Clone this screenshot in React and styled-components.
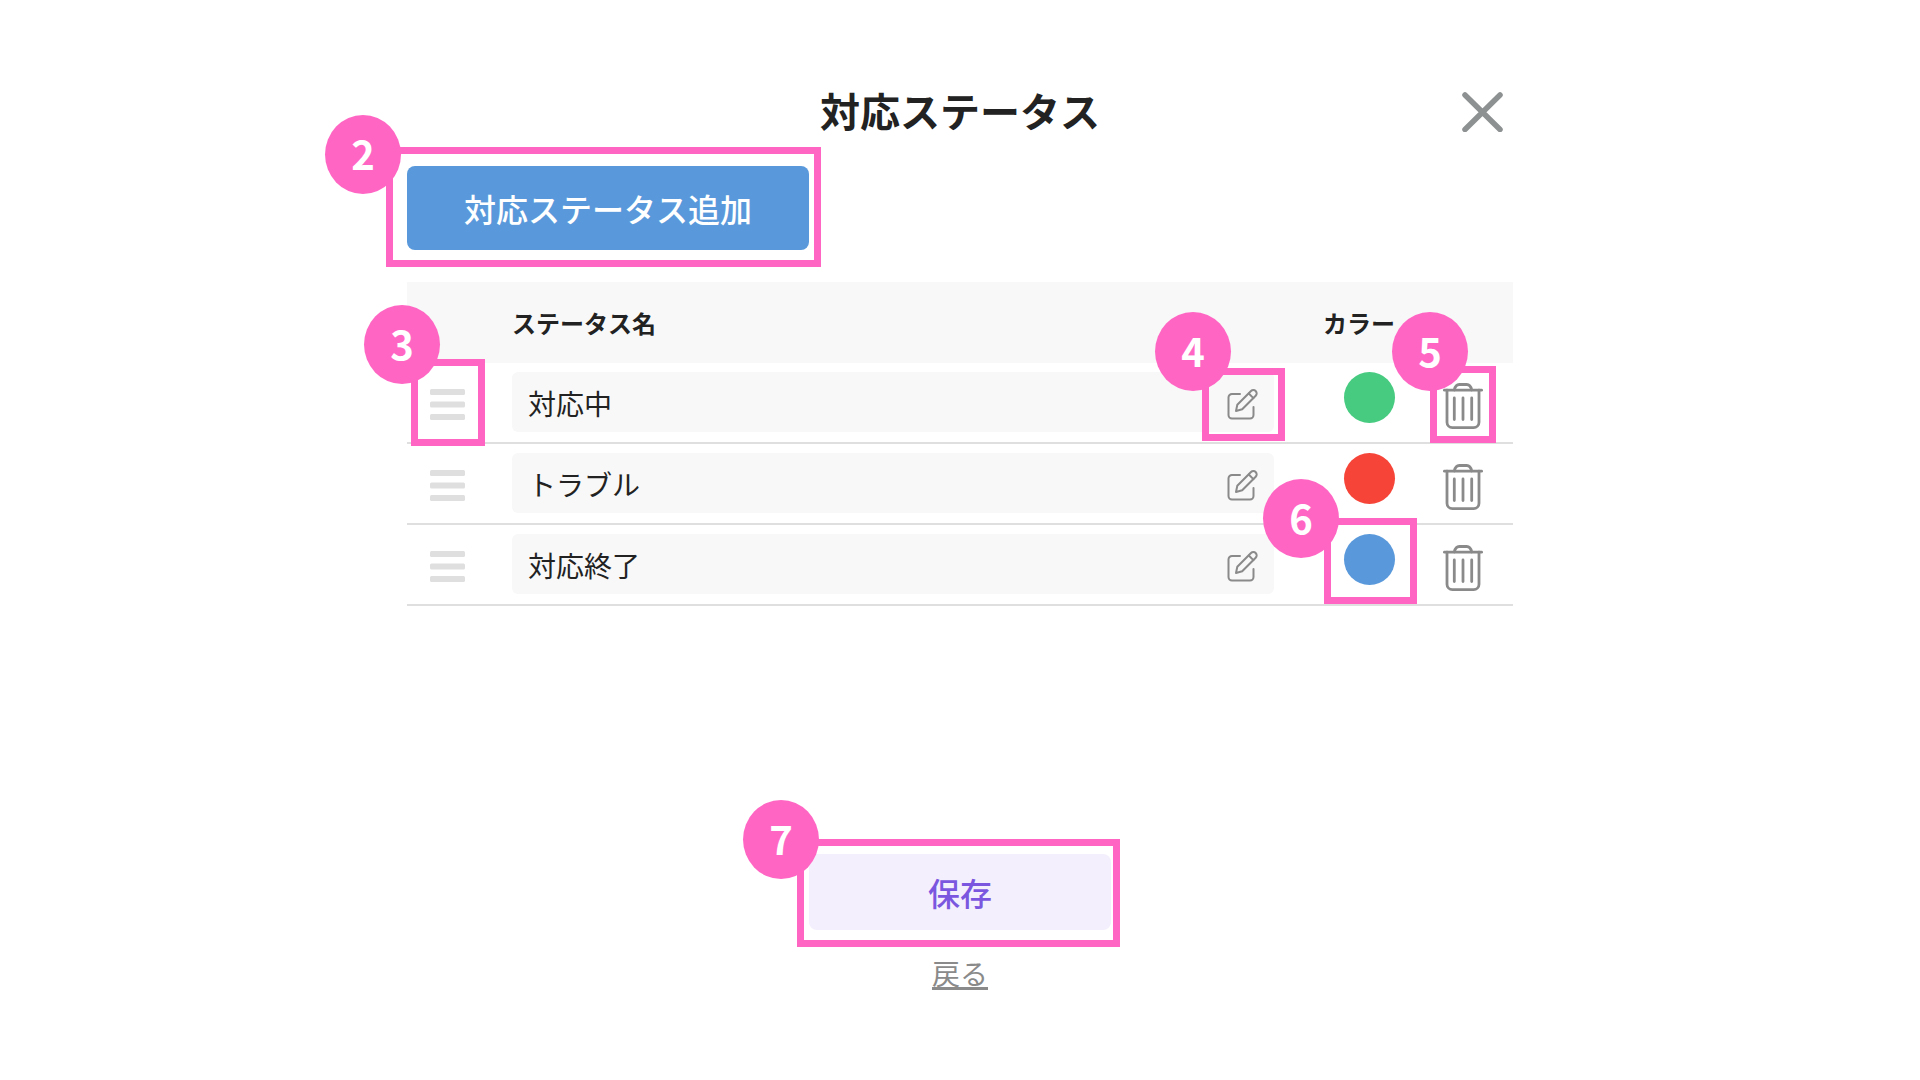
import { useState } from "react";
import styled, { createGlobalStyle } from "styled-components";

const GlobalStyle = createGlobalStyle`
  * {
    box-sizing: border-box;
  }

  body {
    margin: 0;
    background: #fff;
    color: #222;
    font-family: "Noto Sans CJK JP", sans-serif;
  }

  button, input {
    font-family: inherit;
    color: inherit;
  }
`;

const Dialog = styled.main`
  max-width: 1106px;
  margin: 0 auto;
  padding: 92px 0 60px;
`;

const Header = styled.header`
  display: grid;
  grid-template-columns: 1fr auto 1fr;
  align-items: start;
  height: 40px;
  margin-bottom: 34px;
`;

const Title = styled.h1`
  grid-column: 2;
  margin: 0;
  font-size: 40px;
  line-height: 36px;
  font-weight: 700;
`;

const IconButton = styled.button`
  display: block;
  padding: 0;
  border: none;
  background: none;
  cursor: pointer;

  svg {
    display: block;
  }
`;

const CloseButton = styled(IconButton)`
  justify-self: end;
  margin-right: 10px;
`;

const Target = styled.div`
  position: relative;
  width: ${({ $width }) => $width};
`;

const Frame = styled.div`
  position: absolute;
  z-index: 1;
  inset: ${({ $inset }) => $inset};
  border: 7px solid #ff66c4;
  pointer-events: none;
`;

const Badge = styled.span`
  position: absolute;
  left: ${({ $x }) => $x}px;
  top: ${({ $y }) => $y}px;
  display: flex;
  align-items: center;
  justify-content: center;
  width: 76px;
  height: 79px;
  padding-bottom: 4px;
  border-radius: 50%;
  background: #ff66c4;
  color: #fff;
  font-size: 40px;
  line-height: 40px;
  font-weight: 700;
`;

const PrimaryButton = styled.button`
  display: block;
  width: 100%;
  height: ${({ $height }) => $height}px;
  padding: 0;
  border: none;
  border-radius: 8px;
  background: ${({ $background }) => $background};
  color: ${({ $color }) => $color};
  font-size: 32px;
  line-height: 40px;
  font-weight: 500;
  cursor: pointer;
`;

const ListArea = styled.section`
  min-height: 604px;
  padding-top: 32px;
`;

const Table = styled.table`
  width: 100%;
  table-layout: fixed;
  border-collapse: separate;
  border-spacing: 0;
`;

const HeadCell = styled.th`
  width: ${({ $width }) => $width};
  height: 81px;
  padding: 0;
  background: #f8f8f8;
  font-size: 24px;
  line-height: 32px;
  font-weight: 700;
  text-align: left;
`;

const Cell = styled.td`
  height: 81px;
  padding: ${({ $top }) => $top || 9}px 0 9px ${({ $indent }) => $indent || 0}px;
  border-bottom: 2px solid #dfdfdf;
  vertical-align: ${({ $align }) => $align || "middle"};
`;

const NameBox = styled.div`
  display: flex;
  align-items: center;
  height: 60px;
  margin-right: 49px;
  padding: 5px 16px 0;
  border-radius: 6px;
  background: #f8f8f8;
`;

const NameInput = styled.input`
  flex: 1;
  min-width: 0;
  padding: 0 0 4px;
  border: none;
  outline: none;
  background: none;
  font-size: 28px;
  line-height: 40px;
`;

const Swatch = styled.button`
  display: block;
  width: 51px;
  height: 51px;
  padding: 0;
  border: none;
  border-radius: 50%;
  background: ${({ $color }) => $color};
  cursor: pointer;
`;

const Footer = styled.footer`
  display: flex;
  flex-direction: column;
  align-items: center;
  gap: 23px;
`;

const BackLink = styled.a`
  color: #8a8a8a;
  font-size: 28px;
  line-height: 40px;
  text-decoration: underline;
  text-decoration-thickness: 3px;
  text-underline-offset: 2px;
`;

function CloseIcon() {
  return (
    <svg width="41" height="40" viewBox="0 0 41 40" fill="none" stroke="#8d9191" strokeWidth="5.5" strokeLinecap="round">
      <path d="M3 3 38 37.5M38 3 3 37.5" />
    </svg>
  );
}

function HandleIcon() {
  return (
    <svg width="35" height="31" viewBox="0 0 35 31" fill="#dfdfdf">
      <rect width="35" height="6" rx="1.5" />
      <rect y="12.5" width="35" height="6" rx="1.5" />
      <rect y="25" width="35" height="6" rx="1.5" />
    </svg>
  );
}

function EditIcon() {
  return (
    <svg width="31" height="31" viewBox="0 0 31 31" fill="none" stroke="#8a8a8a" strokeWidth="2" strokeLinecap="round" strokeLinejoin="round">
      <path d="M13 5H5a3.5 3.5 0 0 0-3.5 3.5V26A3.5 3.5 0 0 0 5 29.5h18a3.5 3.5 0 0 0 3.5-3.5v-8" />
      <path d="M9 22l1.3-6.3L24 2a3.2 3.2 0 0 1 4.7 4.700L15.2 20.3z" />
      <path d="M21.8 4.5l4.6 4.6" />
    </svg>
  );
}

function TrashIcon() {
  return (
    <svg width="40" height="46" viewBox="0 0 40 46" fill="none" stroke="#8a8a8a" strokeWidth="2.8" strokeLinecap="round">
      <path d="M1.4 7.2h37.2" />
      <path d="M11.3 7c.8-3.7 2.4-5.5 5-5.5h7.4c2.6 0 4.2 1.8 5 5.5" />
      <path d="M4 7.2v32a5.4 5.4 0 0 0 5.4 5.4h21.2a5.4 5.4 0 0 0 5.4-5.4v-32" />
      <path d="M11.3 15v21.5M20 15v21.5M28.7 15v21.5" />
    </svg>
  );
}

function Callout({ number, inset, x, y }) {
  return (
    <Frame $inset={inset}>
      <Badge $x={x - 7} $y={y - 7}>{number}</Badge>
    </Frame>
  );
}

const initialStatuses = [
  { id: 1, name: "対応中", color: "#46cb80" },
  { id: 2, name: "トラブル", color: "#f64438" },
  { id: 3, name: "対応終了", color: "#5999db" },
];

function StatusRow({ status, onRename, onDelete }) {
  const { id, name, color } = status;
  return (
    <tr>
      <Cell $indent={23} $top={13}>
        <Target $width="35px">
          <IconButton type="button" aria-label="並び替え"><HandleIcon /></IconButton>
          {id === 1 && <Callout number={3} inset="-30px -20px -26px -19px" x={-47} y={-54} />}
        </Target>
      </Cell>
      <Cell $align="top">
        <NameBox>
          <NameInput aria-label="ステータス名" value={name} onChange={(e) => onRename(id, e.target.value)} />
          <Target $width="31px">
            <IconButton type="button" aria-label="編集"><EditIcon /></IconButton>
            {id === 1 && <Callout number={4} inset="-21px -27px -21px -25px" x={-47} y={-56} />}
          </Target>
        </NameBox>
      </Cell>
      <Cell $indent={21} $align="top">
        <Target $width="51px">
          <Swatch type="button" aria-label="カラー" $color={color} />
          {id === 3 && <Callout number={6} inset="-16px -22px -19px -20px" x={-61} y={-39} />}
        </Target>
      </Cell>
      <Cell $top={16}>
        <Target $width="40px">
          <IconButton type="button" aria-label="削除" onClick={() => onDelete(id)}><TrashIcon /></IconButton>
          {id === 1 && <Callout number={5} inset="-17px -13px -14px -13px" x={-38} y={-54} />}
        </Target>
      </Cell>
    </tr>
  );
}

function App() {
  const [statuses, setStatuses] = useState(initialStatuses);

  const addStatus = () => setStatuses([...statuses, { id: Date.now(), name: "", color: "#5999db" }]);
  const renameStatus = (id, name) => setStatuses(statuses.map((s) => (s.id === id ? { ...s, name } : s)));
  const deleteStatus = (id) => setStatuses(statuses.filter((s) => s.id !== id));

  return (
    <>
      <GlobalStyle />
      <Dialog>
        <Header>
          <Title>対応ステータス</Title>
          <CloseButton type="button" aria-label="閉じる"><CloseIcon /></CloseButton>
        </Header>
        <Target $width="402px">
          <PrimaryButton type="button" $height={84} $background="#5999db" $color="#fff" onClick={addStatus}>
            対応ステータス追加
          </PrimaryButton>
          <Callout number={2} inset="-19px -12px -17px -21px" x={-61} y={-32} />
        </Target>
        <ListArea>
          <Table>
            <thead>
              <tr>
                <HeadCell $width="105px" />
                <HeadCell>ステータス名</HeadCell>
                <HeadCell $width="120px">カラー</HeadCell>
                <HeadCell $width="70px" />
              </tr>
            </thead>
            <tbody>
              {statuses.map((status) => (
                <StatusRow key={status.id} status={status} onRename={renameStatus} onDelete={deleteStatus} />
              ))}
            </tbody>
          </Table>
        </ListArea>
        <Footer>
          <Target $width="302px">
            <PrimaryButton type="button" $height={76} $background="#f4effd" $color="#7b57e0">保存</PrimaryButton>
            <Callout number={7} inset="-15px -9px -17px -12px" x={-54} y={-39} />
          </Target>
          <BackLink href="#">戻る</BackLink>
        </Footer>
      </Dialog>
    </>
  );
}

export default App;
